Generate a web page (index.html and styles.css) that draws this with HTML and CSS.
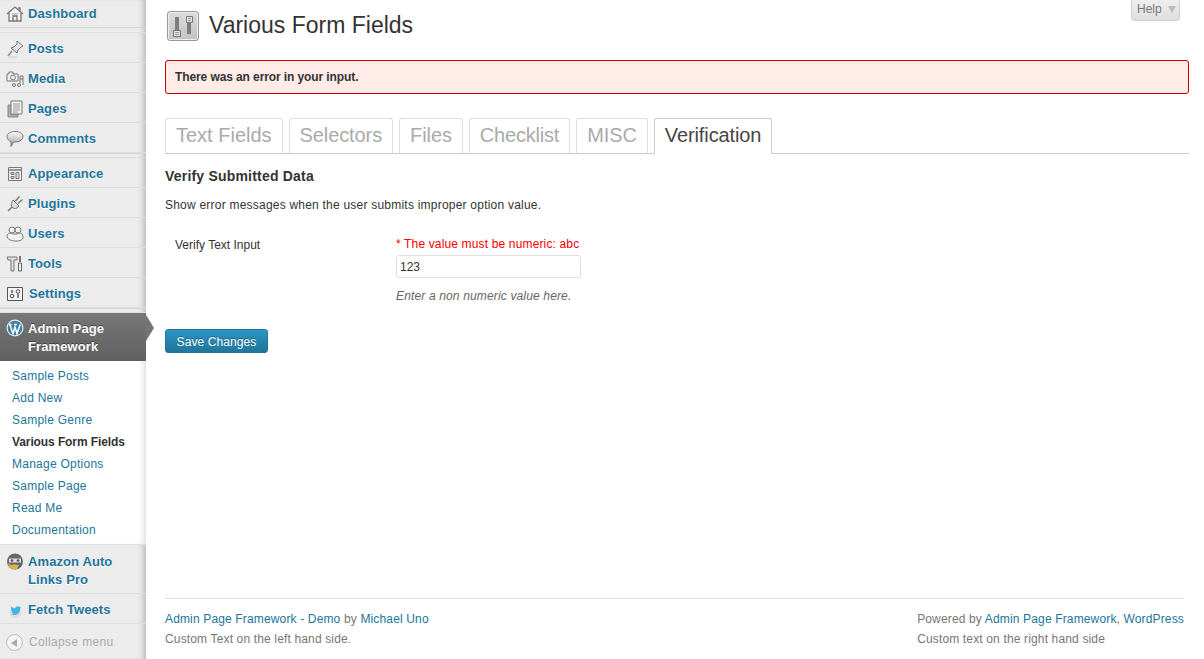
FILE: index.html
```html
<!DOCTYPE html>
<html lang="en">
<head>
    <meta charset="UTF-8">
    <meta name="viewport" content="width=device-width, initial-scale=1.0">
    <title>Various Form Fields</title>
    <link rel="stylesheet" href="styles.css">
</head>
<body>
    <nav class="sidebar">
        <a class="menu-item first" href="#">
            <svg class="icon" viewBox="0 0 18 18"><path d="M1 9 9 2l8 7M3 8v8h12V8M7 16v-5h4v5M12 3h2v3" fill="#f4f4f4" stroke="#777" stroke-width="1.3"/><path d="M6 9h6" stroke="#999"/></svg>
            Dashboard
        </a>
        <div class="menu-sep wide"></div>
        <a class="menu-item" href="#">
            <svg class="icon" viewBox="0 0 18 18"><path d="M11 1l6 5-2 1-3 3-1 3-6-5 3-1 3-3z" fill="#e4e4e4" stroke="#777"/><path d="M6 11l-4 5" stroke="#888" stroke-width="1.4"/><path d="M2 17h9" stroke="#ccc"/></svg>
            Posts
        </a>
        <a class="menu-item" href="#">
            <svg class="icon" viewBox="0 0 18 18"><path d="M1 4h2V2h4v2h5v7H1z" fill="#eee" stroke="#777"/><circle cx="7" cy="7.500" r="2.400" fill="none" stroke="#777"/><path d="M14 6h3M14 9h3M14 6v7M17 6v9" stroke="#777" fill="none"/><circle cx="8" cy="15" r="1.500" fill="none" stroke="#777"/><circle cx="13" cy="15" r="1.500" fill="none" stroke="#777"/></svg>
            Media
        </a>
        <a class="menu-item" href="#">
            <svg class="icon" viewBox="0 0 18 18"><path d="M2 5h10v12H2z" fill="#aaa" stroke="#888"/><path d="M5 1h11v13H5z" fill="#f2f2f2" stroke="#777"/><path d="M7 4h7M7 6h7M7 8h7M7 10h7M7 12h5" stroke="#999"/></svg>
            Pages
        </a>
        <a class="menu-item" href="#">
            <svg class="icon" viewBox="0 0 18 18"><defs><linearGradient id="bubble" x1="0" y1="0" x2="0" y2="1"><stop offset="0" stop-color="#fff"/><stop offset="1" stop-color="#999"/></linearGradient></defs><path d="M9 1.500c4.500 0 8 2 8 5s-3.500 5.500-8 5.500H7.500l-2.500 4.500v-5C3 11 1 9 1 6.500c0-3 3.500-5 8-5z" fill="url(#bubble)" stroke="#777"/></svg>
            Comments
        </a>
        <div class="menu-sep"></div>
        <a class="menu-item" href="#">
            <svg class="icon" viewBox="0 0 18 18"><path d="M2.500 2.500h13v13h-13z" fill="#f2f2f2" stroke="#777"/><path d="M3 5h12" stroke="#777" stroke-width="1.500"/><path d="M5 7.500h3v2H5zM5 11.500h3v2H5zM10 7.500h3v6h-3z" fill="#ddd" stroke="#777"/></svg>
            Appearance
        </a>
        <a class="menu-item" href="#">
            <svg class="icon" viewBox="0 0 18 18"><path d="M7 5l6 6-2 2c-2 1-4 .5-5-1s-1-3 0-5z" fill="#ddd" stroke="#777"/><path d="M9.500 6l4-4.500M12 8.500l4.500-4" stroke="#777" stroke-width="1.300"/><path d="M6 12l-4 4" stroke="#777" stroke-width="1.500"/></svg>
            Plugins
        </a>
        <a class="menu-item" href="#">
            <svg class="icon" viewBox="0 0 18 18"><circle cx="6" cy="5" r="3" fill="#f0f0f0" stroke="#777"/><circle cx="12" cy="5" r="3" fill="#f0f0f0" stroke="#777"/><path d="M1 11c0-2 2-3 4-3l2 1 4 0 2-1c2 0 4 1 4 4s-3 4-7 4c-5 0-9-2-9-5z" fill="#f4f4f4" stroke="#777"/></svg>
            Users
        </a>
        <a class="menu-item" href="#">
            <svg class="icon" viewBox="0 0 18 18"><path d="M1 2h10v3H8v11H5V5H2z" fill="#ddd" stroke="#777"/><path d="M14 1v6" stroke="#555" stroke-width="1.600"/><path d="M12.500 8h3v8h-3z" fill="#eee" stroke="#666"/></svg>
            Tools
        </a>
        <a class="menu-item settings" href="#">
            <svg class="icon" viewBox="0 0 18 18"><path d="M1.500 2.500h15v13h-15z" fill="#f4f4f4" stroke="#555"/><path d="M6 5v3M12 9v4" stroke="#555" stroke-width="1.400"/><circle cx="6" cy="11" r="1.800" fill="none" stroke="#555"/><circle cx="12" cy="6.500" r="1.800" fill="none" stroke="#555"/></svg>
            Settings
        </a>
        <div class="menu-sep"></div>
        <a class="menu-item current" href="#">
            <svg class="icon" viewBox="0 0 18 18"><circle cx="9" cy="9" r="8.500" fill="#e8eef2"/><circle cx="9" cy="9" r="7.300" fill="#3d81a6"/><path d="M3.800 5.500l3.200 9 2-6.500 2 6.500 3.200-9M3 5.500h3M8 5.500h3" fill="none" stroke="#fff" stroke-width="1.500"/></svg>
            <span>Admin Page Framework</span>
        </a>
        <ul class="submenu">
            <li><a href="#">Sample Posts</a></li>
            <li><a href="#">Add New</a></li>
            <li><a href="#">Sample Genre</a></li>
            <li><a class="active" href="#">Various Form Fields</a></li>
            <li><a href="#">Manage Options</a></li>
            <li><a href="#">Sample Page</a></li>
            <li><a href="#">Read Me</a></li>
            <li><a href="#">Documentation</a></li>
        </ul>
        <a class="menu-item tall" href="#">
            <svg class="icon" viewBox="0 0 18 18"><circle cx="9" cy="8.500" r="8" fill="#666"/><path d="M3 5.500h12v4H3z" fill="#ddd"/><circle cx="6" cy="7.500" r="1.300" fill="#555"/><circle cx="12" cy="7.500" r="1.300" fill="#555"/><path d="M2 10c2 2 4 2 6 1.500l5 .5-2 4-4 .5-4-3z" fill="#d9b64c"/></svg>
            <span>Amazon Auto Links Pro</span>
        </a>
        <a class="menu-item" href="#">
            <svg class="icon" viewBox="0 0 18 18"><ellipse cx="9.500" cy="11.500" rx="6" ry="5.500" fill="#ddd"/><path d="M15 5.500l-1.500.5c-.6-.9-2.400-1.200-3.300-.2-.6.7-.6 1.300-.5 1.800-1.700 0-3.200-.7-4.400-2-.6 1.200-.3 2.300.6 3.100l-1-.2c0 1.100.7 1.900 1.800 2.300l-1 .1c.3.800 1 1.300 2 1.500-.8.600-1.700.8-2.700.8 3.500 1.800 9 .3 9.200-5.500l1-1.200-1 .2z" fill="#3db7ea"/></svg>
            Fetch Tweets
        </a>
        <a class="collapse" href="#">
            <span class="collapse-btn"></span>
            Collapse menu
        </a>
    </nav>

    <div class="main">
        <a class="help" href="#">Help <span class="help-arrow"></span></a>

        <header class="page-head">
            <div class="page-icon">
                <svg viewBox="0 0 30 28" width="30" height="28"><path d="M7 5h4v13H7zM19 11h4v11h-4z" fill="#7d7d7d"/><path d="M5.500 18.500h7v6h-7z" fill="#e2e2e2" stroke="#777"/><path d="M18.500 4.500h6v6h-6z" fill="#e2e2e2" stroke="#777"/><path d="M7 20.500h4M7 22.500h4M20 6.500h3M20 8.500h3" stroke="#999"/></svg>
            </div>
            <h2>Various Form Fields</h2>
        </header>

        <div class="notice"><strong>There was an error in your input.</strong></div>

        <div class="tabs">
            <a class="tab" href="#">Text Fields</a>
            <a class="tab" href="#">Selectors</a>
            <a class="tab" href="#">Files</a>
            <a class="tab" href="#">Checklist</a>
            <a class="tab" href="#">MISC</a>
            <a class="tab active" href="#">Verification</a>
        </div>

        <h3>Verify Submitted Data</h3>
        <p class="desc">Show error messages when the user submits improper option value.</p>

        <form class="form-row">
            <label class="field-label" for="verify">Verify Text Input</label>
            <div class="field">
                <div class="field-error">* The value must be numeric: abc</div>
                <input type="text" id="verify" value="123">
                <p class="field-hint">Enter a non numeric value here.</p>
            </div>
        </form>

        <button class="save">Save Changes</button>

        <footer class="footer">
            <div>
                <p><a href="#">Admin Page Framework - Demo</a> by <a href="#">Michael Uno</a></p>
                <p>Custom Text on the left hand side.</p>
            </div>
            <div>
                <p>Powered by <a href="#">Admin Page Framework</a>, <a href="#">WordPress</a></p>
                <p>Custom text on the right hand side</p>
            </div>
        </footer>
    </div>
</body>
</html>
```
FILE: styles.css
```css
html, body {
    height: 100%;
}
body {
    margin: 0;
    display: flex;
    height: 659px;
    overflow: hidden;
    font-family: "Liberation Sans", Arial, sans-serif;
    font-size: 12px;
    letter-spacing: 0.15px;
    color: #333;
    background-color: #fff;
}
a {
    color: #21759b;
    text-decoration: none;
}
p {
    margin: 0;
}

/* sidebar */
.sidebar {
    width: 146px;
    flex-shrink: 0;
    display: flex;
    flex-direction: column;
    background-color: #ececec;
    box-shadow: inset -6px 0 6px -4px rgba(0, 0, 0, 0.25);
}
.menu-item {
    display: flex;
    align-items: center;
    height: 27px;
    padding: 2px 0 0 6px;
    border-bottom: 1px solid #dcdcdc;
    font-size: 13px;
    font-weight: bold;
    line-height: 18px;
    letter-spacing: 0.1px;
    text-shadow: 0 1px 0 #fff;
}
.menu-item.first {
    height: 27px;
    padding-top: 0;
    border-bottom: none;
}
.icon {
    width: 18px;
    height: 18px;
    margin-right: 4px;
    flex-shrink: 0;
}
.settings .icon {
    margin-right: 5px;
}
.menu-sep {
    height: 3px;
    border-top: 1px solid #d6d6d6;
    border-bottom: 1px solid #dcdcdc;
}
.menu-sep.wide {
    height: 4px;
}
.menu-item.current {
    position: relative;
    height: 47px;
    padding-top: 1px;
    border-bottom: none;
    color: #fff;
    background: linear-gradient(#777, #606060);
    text-shadow: 0 -1px 0 rgba(0, 0, 0, 0.4);
}
.current .icon {
    align-self: flex-start;
    margin-top: 5px;
}
.current::after {
    content: "";
    position: absolute;
    left: 146px;
    top: 2px;
    border-left: 8px solid #747474;
    border-top: 13px solid transparent;
    border-bottom: 13px solid transparent;
}
.submenu {
    list-style: none;
    margin: 0;
    padding: 4px 0 3px;
    background-color: #fff;
    border-bottom: 1px solid #dcdcdc;
    box-shadow: inset -6px 0 6px -4px rgba(0, 0, 0, 0.15);
    letter-spacing: 0.25px;
}
.submenu a {
    display: block;
    height: 22px;
    padding-left: 12px;
    line-height: 23px;
}
.submenu a.active {
    color: #333;
    font-weight: bold;
    letter-spacing: -0.1px;
}
.menu-item.tall {
    height: 45px;
    padding-top: 3px;
}
.tall .icon {
    align-self: flex-start;
    margin-top: 5px;
}
.collapse {
    display: flex;
    align-items: center;
    padding: 1px 0 0 6px;
    color: #aaa;
    letter-spacing: 0.35px;
    flex-grow: 1;
}
.collapse-btn {
    position: relative;
    width: 15px;
    height: 15px;
    margin-right: 6px;
    border: 1px solid #bbb;
    border-radius: 50%;
    background-color: #f4f4f4;
}
.collapse-btn::before {
    content: "";
    position: absolute;
    left: 4px;
    top: 4px;
    border-right: 6px solid #aaa;
    border-top: 4px solid transparent;
    border-bottom: 4px solid transparent;
}

/* main column */
.main {
    position: relative;
    flex: 1;
    display: flex;
    flex-direction: column;
    padding: 0 15px 0 19px;
    min-width: 0;
}
.help {
    position: absolute;
    top: 0;
    right: 24px;
    height: 20px;
    padding: 0 3px 0 5px;
    line-height: 18px;
    letter-spacing: 0;
    color: #777;
    background: linear-gradient(#eee, #dfdfdf);
    border: 1px solid #d0d0d0;
    border-top: none;
    border-radius: 0 0 4px 4px;
}
.help-arrow {
    display: inline-block;
    margin-left: 3px;
    border-top: 7px solid #bbb;
    border-left: 4px solid transparent;
    border-right: 4px solid transparent;
}
.page-head {
    display: flex;
    align-items: center;
    height: 42px;
    padding: 9px 0 0 2px;
    margin-bottom: 18px;
    box-sizing: border-box;
}
.page-icon {
    display: flex;
    width: 30px;
    height: 28px;
    border: 1px solid #999;
    border-radius: 3px;
    background: linear-gradient(#dcdcdc, #c2c2c2);
    box-shadow: inset 0 0 0 1px #eee;
    overflow: hidden;
    margin-right: 10px;
}
h2 {
    margin: 0;
    font-size: 23px;
    font-weight: normal;
    line-height: 29px;
    letter-spacing: 0;
    color: #333;
}
.notice {
    height: 32px;
    line-height: 32px;
    padding-left: 9px;
    letter-spacing: -0.1px;
    background-color: #ffebe8;
    border: 1px solid #c00;
    border-radius: 3px;
}
.tabs {
    display: flex;
    gap: 6px;
    margin-top: 24px;
    height: 36px;
    box-sizing: border-box;
    border-bottom: 1px solid #ccc;
}
.tab {
    height: 35px;
    box-sizing: border-box;
    padding: 0 10px;
    font-size: 20px;
    line-height: 33px;
    letter-spacing: -0.1px;
    color: #aaa;
    border: 1px solid #dfdfdf;
    border-bottom: none;
    border-radius: 3px 3px 0 0;
}
.tab:first-child {
    letter-spacing: 0;
}
.tab:nth-child(4) {
    letter-spacing: -0.2px;
}
.tab.active {
    height: 36px;
    color: #464646;
    background-color: #fff;
    border-color: #ccc;
}
h3 {
    margin: 13px 0 0;
    font-size: 14px;
    line-height: 18px;
    letter-spacing: 0.2px;
    color: #333;
}
.desc {
    margin-top: 11px;
    line-height: 18px;
    letter-spacing: 0.22px;
}
.form-row {
    display: flex;
    margin-top: 22px;
}
.field-label {
    width: 231px;
    padding: 0 0 0 10px;
    box-sizing: border-box;
    line-height: 18px;
    letter-spacing: 0;
}
.field-error {
    line-height: 16px;
    color: #f00;
}
.field input {
    display: block;
    width: 185px;
    height: 23px;
    box-sizing: border-box;
    margin: 3px 0 0;
    padding: 1px 3px;
    font: 12px "Liberation Sans", Arial, sans-serif;
    color: #333;
    border: 1px solid #dfdfdf;
    border-radius: 3px;
}
.field-hint {
    margin-top: 9px;
    line-height: 18px;
    font-style: italic;
    color: #666;
}
.save {
    align-self: flex-start;
    margin-top: 24px;
    height: 24px;
    width: 103px;
    padding: 1px 0 0;
    font: 12px "Liberation Sans", Arial, sans-serif;
    letter-spacing: 0.1px;
    color: #fff;
    text-shadow: 0 -1px 0 rgba(0, 0, 0, 0.3);
    background: linear-gradient(#2a95c5, #21759b);
    border: 1px solid #21759b;
    border-radius: 3px;
}
.footer {
    display: flex;
    justify-content: space-between;
    margin-top: auto;
    margin-right: 5px;
    padding-top: 10px;
    height: 50px;
    border-top: 1px solid #dfdfdf;
    line-height: 20px;
    color: #777;
}
```
